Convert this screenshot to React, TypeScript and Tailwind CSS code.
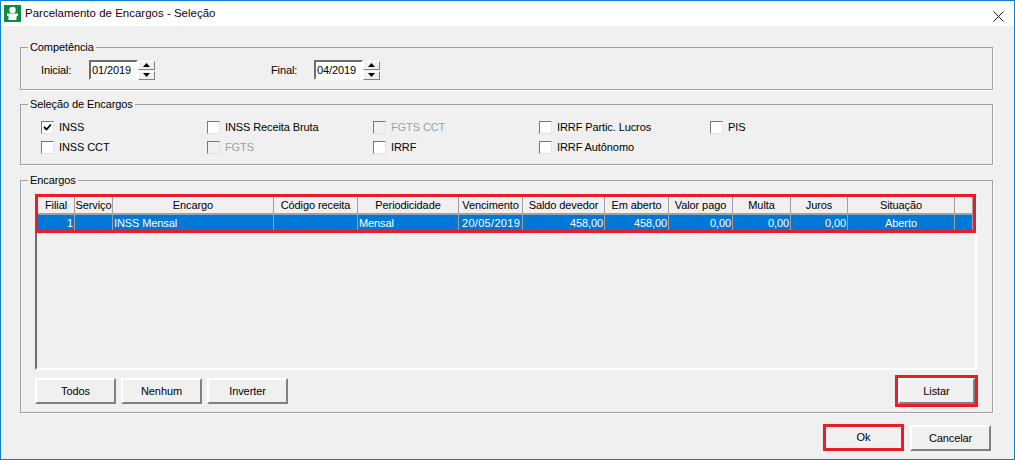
import React from "react";

const cols: { t: string; w: number; v: string; a: string }[] = [
  { t: "Filial", w: 37, v: "1", a: "text-right" },
  { t: "Serviço", w: 38, v: "", a: "text-left" },
  { t: "Encargo", w: 161, v: "INSS Mensal", a: "text-left" },
  { t: "Código receita", w: 84, v: "", a: "text-left" },
  { t: "Periodicidade", w: 101, v: "Mensal", a: "text-left" },
  { t: "Vencimento", w: 64, v: "20/05/2019", a: "text-left pl-[3px] tracking-[0.3px]" },
  { t: "Saldo devedor", w: 82, v: "458,00", a: "text-right" },
  { t: "Em aberto", w: 64, v: "458,00", a: "text-right" },
  { t: "Valor pago", w: 64, v: "0,00", a: "text-right" },
  { t: "Multa", w: 58, v: "0,00", a: "text-right" },
  { t: "Juros", w: 57, v: "0,00", a: "text-right" },
  { t: "Situação", w: 107, v: "Aberto", a: "text-center" },
  { t: "", w: 18, v: "", a: "text-left" },
];

const checks: { t: string; on?: boolean; off?: boolean }[] = [
  { t: "INSS", on: true },
  { t: "INSS Receita Bruta" },
  { t: "FGTS CCT", off: true },
  { t: "IRRF Partic. Lucros" },
  { t: "PIS" },
  { t: "INSS CCT" },
  { t: "FGTS", off: true },
  { t: "IRRF" },
  { t: "IRRF Autônomo" },
];

function Check({ t, on, off }: { t: string; on?: boolean; off?: boolean }) {
  return (
    <div className="flex h-[13px] items-center">
      <div
        className={`flex h-[13px] w-[13px] items-center justify-center border border-t-[#777] border-l-[#777] border-r-[#e3e3e3] border-b-[#e3e3e3] ${off ? "bg-[#f0f0f0]" : "bg-white"}`}
      >
        {on && (
          <svg width="9" height="9" viewBox="0 0 9 9">
            <path d="M1 4 L3.5 6.5 L8 1.5" fill="none" stroke="#000" strokeWidth="1.8" />
          </svg>
        )}
      </div>
      <span className={`ml-[5px] whitespace-nowrap ${off ? "text-[#a0a0a0]" : "text-black"}`}>{t}</span>
    </div>
  );
}

function SpinBtn({ up }: { up?: boolean }) {
  return (
    <div className="flex h-[9px] w-[17px] items-center justify-center border border-t-white border-l-white border-r-[#808080] border-b-[#808080] bg-[#f0f0f0]">
      <svg width="7" height="4" viewBox="0 0 7 4">
        <path d={up ? "M3.5 0 L7 4 L0 4 Z" : "M0 0 L7 0 L3.5 4 Z"} fill="#000" />
      </svg>
    </div>
  );
}

function DateField({ value }: { value: string }) {
  return (
    <div className="flex h-[20px] items-stretch">
      <div className="flex h-[20px] w-[49px] items-center border-2 border-t-[#6d6d6d] border-l-[#6d6d6d] border-r-white border-b-white bg-white pl-[1px] leading-none text-black">
        {value}
      </div>
      <div className="flex w-[17px] flex-col justify-center gap-[1px]">
        <SpinBtn up />
        <SpinBtn />
      </div>
    </div>
  );
}

function Btn({ children }: { children: React.ReactNode }) {
  return (
    <button className="flex h-[26px] w-[81px] items-center justify-center border-2 border-t-white border-l-white border-r-[#808080] border-b-[#808080] bg-[#f0f0f0] text-black">
      {children}
    </button>
  );
}

function Group({ title, className, children }: { title: string; className: string; children: React.ReactNode }) {
  return (
    <fieldset className={`mx-[19px] w-[973px] border border-[#a0a0a0] shadow-[1px_1px_0_#fff] ${className}`}>
      <legend className="ml-[7px] h-[13px] px-[2px] leading-[13px] text-black">{title}</legend>
      {children}
    </fieldset>
  );
}

export default function App() {
  return (
    <div
      className="flex h-[460px] w-[1015px] flex-col border border-[#0b7fd6] bg-[#f0f0f0] text-[11px] leading-[13px] tracking-[-0.1px]"
      style={{ fontFamily: '"Liberation Sans", Arial, sans-serif' }}
    >
      <div className="flex h-[25px] shrink-0 items-center bg-white pl-[3px] pr-[10px]">
        <svg width="17" height="17" viewBox="0 0 17 17" className="shrink-0">
          <rect width="17" height="17" fill="#0f8a43" />
          <circle cx="8.5" cy="5" r="3.2" fill="#fff" />
          <path d="M3 8.5 H14 V10.5 L12.5 11.5 V15 H4.5 V11.5 L3 10.5 Z" fill="#fff" />
        </svg>
        <span className="ml-[4px] text-[11.5px] tracking-normal text-[#1a0010]">Parcelamento de Encargos - Seleção</span>
        <svg width="11" height="11" viewBox="0 0 11 11" className="ml-auto mt-[6px]">
          <path d="M0.5 0.5 L10.5 10.5 M10.5 0.5 L0.5 10.5" stroke="#111" strokeWidth="1" fill="none" />
        </svg>
      </div>

      <Group title="Competência" className="mt-[15px] h-[49px]">
        <div className="flex items-center pt-[6px] pl-[20px]">
          <span className="w-[48px] text-black">Inicial:</span>
          <DateField value="01/2019" />
          <span className="ml-[116px] w-[43px] text-black">Final:</span>
          <DateField value="04/2019" />
        </div>
      </Group>

      <Group title="Seleção de Encargos" className="mt-[8px] h-[67px]">
        <div className="grid grid-cols-[166px_166px_166px_171px_100px] gap-y-[7px] pt-[10px] pl-[20px]">
          {checks.map((c) => (
            <Check key={c.t} {...c} />
          ))}
        </div>
      </Group>

      <Group title="Encargos" className="mt-[9px] h-[239px]">
        <div className="pt-[8px] pl-[14px]">
          <div className="h-[175px] w-[942px] border-2 border-t-[#6d6d6d] border-l-[#6d6d6d] border-r-white border-b-white pl-[1px]">
            <div className="w-[935px] outline-3 outline-[#ed1c24]">
              <div className="flex h-[18px] border-b-2 border-[#a0a0a0]">
                {cols.map((c, i) => (
                  <div
                    key={i}
                    style={{ width: c.w }}
                    className="flex h-[16px] shrink-0 items-center justify-center overflow-hidden whitespace-nowrap border-r border-[#a0a0a0] bg-[#f0f0f0] text-black"
                  >
                    {c.t}
                  </div>
                ))}
              </div>
              <div className="flex h-[15px] bg-[#0078d7]">
                {cols.map((c, i) => (
                  <div
                    key={i}
                    style={{ width: c.w }}
                    className={`h-[15px] shrink-0 overflow-hidden whitespace-nowrap border-r border-[#a0a0a0] px-[1px] leading-[16px] text-white ${c.a}`}
                  >
                    {c.v}
                  </div>
                ))}
              </div>
            </div>
          </div>
          <div className="mt-[8px] flex w-[941px] items-center gap-[5px]">
            <Btn>Todos</Btn>
            <Btn>Nenhum</Btn>
            <Btn>Inverter</Btn>
            <button className="ml-auto mr-[1px] flex h-[26px] w-[77px] items-center justify-center border-2 border-t-white border-l-white border-r-[#808080] border-b-[#808080] bg-[#f0f0f0] text-black outline-3 outline-[#ed1c24]">
              Listar
            </button>
          </div>
        </div>
      </Group>

      <div className="mt-[11px] flex h-[27px] w-[990px] items-end justify-end gap-[6px]">
        <button className="flex h-[27px] w-[81px] items-center justify-center border-3 border-[#ed1c24] bg-[#f0f0f0] text-black">
          Ok
        </button>
        <Btn>Cancelar</Btn>
      </div>
    </div>
  );
}
